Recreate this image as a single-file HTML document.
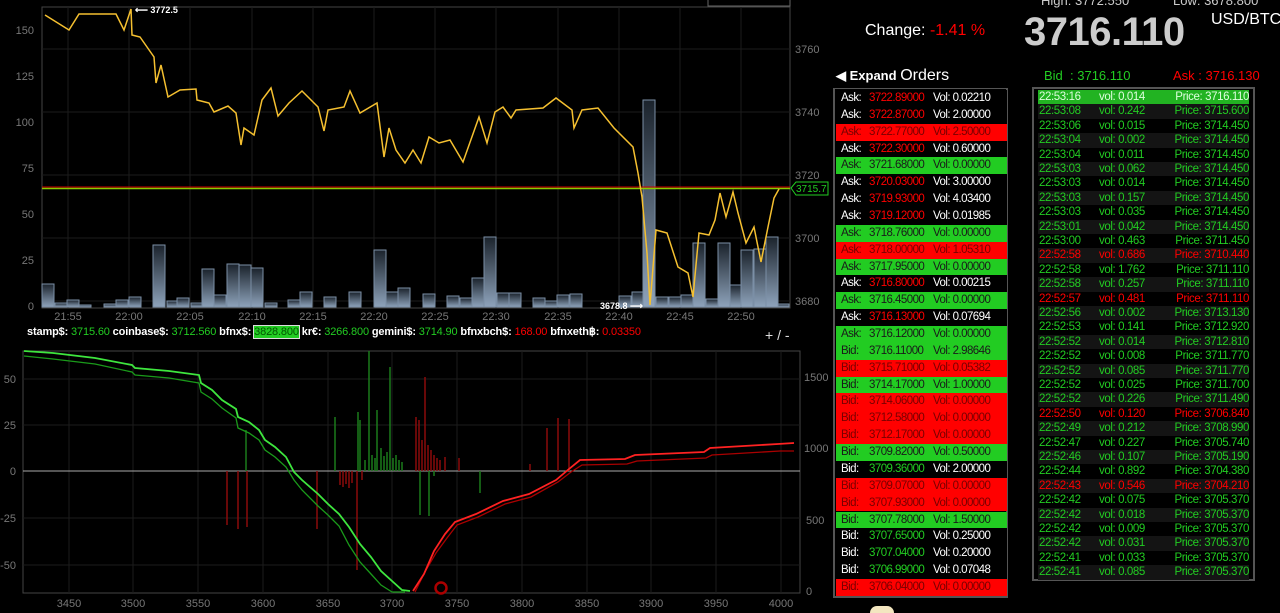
<!DOCTYPE html>
<html><head><meta charset="utf-8"><style>
*{margin:0;padding:0;box-sizing:border-box}
body{width:1280px;height:613px;background:#000;overflow:hidden;position:relative;font-family:"Liberation Sans",sans-serif;color:#fff}
.a{position:absolute;white-space:nowrap}
#ord{position:absolute;left:833px;top:88px;width:175px;height:510px;border:2px solid #555;border-top-width:1px}
.or{position:absolute;left:1px;width:171px;height:16.86px;font-size:11.5px;letter-spacing:-0.55px;line-height:17px}
.or span{position:absolute}
.k{left:5px}.p{left:33px}.v{left:97px}
.bk{background:#000;color:#fff}.bk .p{color:#f00}.bk.b .p{color:#2c2}
.gr{background:#2c2;color:#1a1a1a}.gr .p,.gr .v{color:#1a1a1a}
.rd{background:#f00;color:#700}
#trd{position:absolute;left:1032px;top:87px;width:223px;height:494px;border:2px solid #555}
.tr{position:absolute;left:4px;width:211px;height:14.4px;font-size:11.5px;letter-spacing:-0.4px;line-height:14.4px;color:#2c2}
.tr span{position:absolute}
.t1{left:1px}.t2{left:61px}.t3{right:0}
.g1{background:#141414}
.red{color:#f00}
#tick{position:absolute;left:27px;top:325px;font-size:11px;letter-spacing:-0.15px;white-space:nowrap;line-height:14px}
#tick b{color:#fff}
#tick .g{color:#2c2}#tick .r{color:#f00}
</style></head><body>

<svg class="a" style="left:0;top:0" width="830" height="613" font-family="Liberation Sans" font-size="11">
<rect x="42" y="7" width="748" height="301" fill="#000" stroke="#444"/>
<g stroke="#1c1c1c">
<line x1="42" y1="49" x2="790" y2="49"/><line x1="42" y1="112" x2="790" y2="112"/><line x1="42" y1="175" x2="790" y2="175"/><line x1="42" y1="238" x2="790" y2="238"/><line x1="42" y1="301" x2="790" y2="301"/>
<line x1="68" y1="7" x2="68" y2="308"/><line x1="129" y1="7" x2="129" y2="308"/><line x1="190" y1="7" x2="190" y2="308"/><line x1="252" y1="7" x2="252" y2="308"/><line x1="313" y1="7" x2="313" y2="308"/><line x1="374" y1="7" x2="374" y2="308"/><line x1="435" y1="7" x2="435" y2="308"/><line x1="496" y1="7" x2="496" y2="308"/><line x1="558" y1="7" x2="558" y2="308"/><line x1="619" y1="7" x2="619" y2="308"/><line x1="680" y1="7" x2="680" y2="308"/><line x1="741" y1="7" x2="741" y2="308"/>
</g>
<rect x="708" y="-2" width="82" height="8" fill="#000" stroke="#666"/>
<defs><linearGradient id="vg" x1="0" y1="0" x2="0" y2="1"><stop offset="0" stop-color="#1b232c"/><stop offset="1" stop-color="#8ea3bb"/></linearGradient></defs>
<g fill="url(#vg)" stroke="#7b8fa6" stroke-width="1">
<rect x="42" y="284" width="12" height="23"/><rect x="55" y="303" width="12" height="4"/><rect x="67" y="300" width="12" height="7"/><rect x="79" y="305" width="12" height="2"/><rect x="104" y="304" width="12" height="3"/><rect x="116" y="300" width="12" height="7"/><rect x="129" y="297" width="12" height="10"/><rect x="153" y="245" width="12" height="62"/><rect x="167" y="301" width="12" height="6"/><rect x="177" y="298" width="12" height="9"/><rect x="191" y="303" width="12" height="4"/><rect x="202" y="269" width="12" height="38"/><rect x="214" y="295" width="12" height="12"/><rect x="227" y="264" width="12" height="43"/><rect x="239" y="265" width="12" height="42"/><rect x="251" y="268" width="12" height="39"/><rect x="265" y="303" width="12" height="4"/><rect x="288" y="300" width="12" height="7"/><rect x="300" y="292" width="12" height="15"/><rect x="324" y="297" width="12" height="10"/><rect x="349" y="292" width="12" height="15"/><rect x="374" y="250" width="12" height="57"/><rect x="386" y="292" width="12" height="15"/><rect x="398" y="288" width="12" height="19"/><rect x="423" y="294" width="12" height="13"/><rect x="447" y="296" width="12" height="11"/><rect x="460" y="298" width="12" height="9"/><rect x="472" y="278" width="12" height="29"/><rect x="484" y="237" width="12" height="70"/><rect x="497" y="293" width="12" height="14"/><rect x="509" y="293" width="12" height="14"/><rect x="533" y="298" width="12" height="9"/><rect x="545" y="301" width="12" height="6"/><rect x="557" y="295" width="12" height="12"/><rect x="570" y="294" width="12" height="13"/><rect x="619" y="296" width="12" height="11"/><rect x="632" y="292" width="12" height="15"/><rect x="643" y="100" width="12" height="207"/><rect x="656" y="297" width="12" height="10"/><rect x="669" y="297" width="12" height="10"/><rect x="681" y="295" width="12" height="12"/><rect x="693" y="243" width="12" height="64"/><rect x="706" y="299" width="12" height="8"/><rect x="718" y="243" width="12" height="64"/><rect x="730" y="285" width="12" height="22"/><rect x="741" y="250" width="12" height="57"/><rect x="754" y="249" width="12" height="58"/><rect x="766" y="237" width="12" height="70"/><rect x="778" y="304" width="11" height="3"/>
</g>
<line x1="42" y1="187" x2="790" y2="187" stroke="#c00" stroke-width="1"/>
<line x1="42" y1="188.5" x2="790" y2="188.5" stroke="#8c0" stroke-width="1.5"/>
<polyline fill="none" stroke="#f5c030" stroke-width="1.5" points="45,15 53,20 69,30 79,14 116,14 124,30 131,9 132,35 140,37 154,57 156,83 161,65 168,97 180,90 196,89 197,100 209,103 214,112 228,106 236,113 241,145 244,128 254,135 262,100 271,88 278,116 289,103 302,91 318,107 324,131 328,110 344,107 350,91 360,113 377,103 384,157 389,128 396,150 405,163 413,150 421,163 429,137 439,143 450,140 463,162 479,117 487,143 495,112 503,107 511,118 516,110 543,108 556,98 572,110 574,128 582,110 598,108 614,128 633,147 638,173 642,197 647,253 650,305 656,230 667,233 678,267 688,273 693,297 699,233 709,235 715,220 720,193 726,217 733,192 738,213 746,243 754,227 761,262 768,227 774,198 779,189"/>
<g fill="#777" text-anchor="end"><text x="34" y="34">150</text><text x="34" y="80">125</text><text x="34" y="126">100</text><text x="34" y="172">75</text><text x="34" y="218">50</text><text x="34" y="264">25</text><text x="34" y="310">0</text></g>
<g fill="#777"><text x="795" y="53">3760</text><text x="795" y="116">3740</text><text x="795" y="179">3720</text><text x="795" y="242">3700</text><text x="795" y="305">3680</text></g>
<g fill="#777" text-anchor="middle"><text x="68" y="320">21:55</text><text x="129" y="320">22:00</text><text x="190" y="320">22:05</text><text x="252" y="320">22:10</text><text x="313" y="320">22:15</text><text x="374" y="320">22:20</text><text x="435" y="320">22:25</text><text x="496" y="320">22:30</text><text x="558" y="320">22:35</text><text x="619" y="320">22:40</text><text x="680" y="320">22:45</text><text x="741" y="320">22:50</text></g>
<text x="135" y="13" fill="#fff" font-size="9" font-weight="bold">⟵ 3772.5</text>
<text x="600" y="309" fill="#fff" font-size="9" font-weight="bold">3678.8 ⟶</text>
<polygon points="791,188 796,182 828,182 828,195 796,195" fill="#000" stroke="#2c2"/>
<text x="796" y="192" fill="#2c2" font-size="10">3715.7</text>
<text x="765" y="340" fill="#ddd" font-size="14">+ / -</text>
<rect x="23" y="351" width="777" height="242" fill="#000" stroke="#444"/>
<g stroke="#1c1c1c">
<line x1="23" y1="379" x2="800" y2="379"/><line x1="23" y1="425" x2="800" y2="425"/><line x1="23" y1="518" x2="800" y2="518"/><line x1="23" y1="565" x2="800" y2="565"/>
<line x1="69" y1="351" x2="69" y2="593"/><line x1="133" y1="351" x2="133" y2="593"/><line x1="198" y1="351" x2="198" y2="593"/><line x1="263" y1="351" x2="263" y2="593"/><line x1="328" y1="351" x2="328" y2="593"/><line x1="392" y1="351" x2="392" y2="593"/><line x1="457" y1="351" x2="457" y2="593"/><line x1="522" y1="351" x2="522" y2="593"/><line x1="587" y1="351" x2="587" y2="593"/><line x1="651" y1="351" x2="651" y2="593"/><line x1="716" y1="351" x2="716" y2="593"/><line x1="781" y1="351" x2="781" y2="593"/>
</g>
<line x1="23" y1="471" x2="800" y2="471" stroke="#aaa"/>
<g stroke="#1a7a1a" stroke-width="1.5">
<line x1="246" y1="471" x2="246" y2="430"/><line x1="335" y1="471" x2="335" y2="417"/><line x1="358" y1="471" x2="358" y2="412"/><line x1="360" y1="471" x2="360" y2="420"/><line x1="369" y1="471" x2="369" y2="351"/><line x1="377" y1="471" x2="377" y2="410"/><line x1="390" y1="471" x2="390" y2="367"/>
<line x1="372" y1="471" x2="372" y2="455"/><line x1="375" y1="471" x2="375" y2="458"/><line x1="381" y1="471" x2="381" y2="448"/><line x1="384" y1="471" x2="384" y2="456"/><line x1="387" y1="471" x2="387" y2="452"/><line x1="393" y1="471" x2="393" y2="458"/><line x1="396" y1="471" x2="396" y2="455"/><line x1="399" y1="471" x2="399" y2="460"/><line x1="402" y1="471" x2="402" y2="462"/><line x1="365" y1="471" x2="365" y2="460"/>
<line x1="420" y1="471" x2="420" y2="515"/><line x1="429" y1="471" x2="429" y2="516"/><line x1="480" y1="471" x2="480" y2="493"/><line x1="434" y1="471" x2="434" y2="476"/>
</g>
<g stroke="#8a0a0a" stroke-width="1.5">
<line x1="416" y1="471" x2="416" y2="417"/><line x1="425" y1="471" x2="425" y2="377"/><line x1="419" y1="471" x2="419" y2="420"/><line x1="422" y1="471" x2="422" y2="440"/><line x1="428" y1="471" x2="428" y2="445"/><line x1="431" y1="471" x2="431" y2="450"/><line x1="434" y1="471" x2="434" y2="455"/><line x1="437" y1="471" x2="437" y2="458"/><line x1="440" y1="471" x2="440" y2="460"/><line x1="445" y1="471" x2="445" y2="457"/><line x1="459" y1="471" x2="459" y2="458"/>
<line x1="227" y1="471" x2="227" y2="525"/><line x1="238" y1="471" x2="238" y2="529"/><line x1="247" y1="471" x2="247" y2="527"/><line x1="317" y1="471" x2="317" y2="529"/><line x1="357" y1="471" x2="357" y2="570"/>
<line x1="340" y1="471" x2="340" y2="485"/><line x1="343" y1="471" x2="343" y2="487"/><line x1="346" y1="471" x2="346" y2="484"/><line x1="349" y1="471" x2="349" y2="488"/><line x1="352" y1="471" x2="352" y2="483"/><line x1="362" y1="471" x2="362" y2="480"/>
<line x1="547" y1="471" x2="547" y2="428"/><line x1="558" y1="471" x2="558" y2="418"/><line x1="569" y1="471" x2="569" y2="419"/><line x1="530" y1="471" x2="530" y2="464"/>
</g>
<polyline fill="none" stroke="#1a9a1a" stroke-width="1.3" points="24,356 53,359 95,364 132,372 135,375 169,378 199,383 201,392 212,399 222,408 236,418 238,428 249,433 259,440 265,450 275,457 286,467 294,480 302,490 318,506 328,515 339,526 349,545 360,562 371,574 381,585 392,592 405,592"/>
<polyline fill="none" stroke="#3ee63e" stroke-width="1.8" points="24,351 53,353 95,358 132,365 135,368 169,371 199,375 201,383 212,390 222,400 236,409 238,417 249,422 259,430 265,440 275,447 286,457 294,472 302,480 318,494 328,504 339,514 349,527 360,544 371,557 381,571 392,581 402,590 410,591"/>
<polyline fill="none" stroke="#a00" stroke-width="1.3" points="415,592 426,570 436,553 447,538 457,525 478,517 505,504 531,497 558,482 571,472 582,465 627,464 637,461 706,458 712,455 780,451 794,451"/>
<polyline fill="none" stroke="#f22" stroke-width="1.8" points="413,591 424,574 434,551 445,534 455,522 476,514 503,501 529,494 556,480 569,469 580,460 625,459 635,455 704,452 710,448 778,444 794,443"/>
<circle cx="441" cy="588" r="5.5" fill="none" stroke="#a00" stroke-width="2.5"/>
<g fill="#777" text-anchor="end"><text x="16" y="383">50</text><text x="16" y="429">25</text><text x="16" y="475">0</text><text x="16" y="522">-25</text><text x="16" y="569">-50</text></g>
<g fill="#777"><text x="804" y="381">1500</text><text x="804" y="452">1000</text><text x="806" y="524">500</text><text x="806" y="595">0</text></g>
<g fill="#777" text-anchor="middle"><text x="69" y="607">3450</text><text x="133" y="607">3500</text><text x="198" y="607">3550</text><text x="263" y="607">3600</text><text x="328" y="607">3650</text><text x="392" y="607">3700</text><text x="457" y="607">3750</text><text x="522" y="607">3800</text><text x="587" y="607">3850</text><text x="651" y="607">3900</text><text x="716" y="607">3950</text><text x="781" y="607">4000</text></g>
</svg>

<div id="tick"><b>stamp$:</b> <span class="g">3715.60</span> <b>coinbase$:</b> <span class="g">3712.560</span> <b>bfnx$:</b> <span style="background:#2c2;color:#050;outline:1px solid #ddd">3828.800</span> <b>kr€:</b> <span class="g">3266.800</span> <b>gemini$:</b> <span class="g">3714.90</span> <b>bfnxbch$:</b> <span class="r">168.00</span> <b>bfnxeth฿:</b> <span class="r">0.03350</span></div>

<div class="a" style="left:1041px;top:-7px;font-size:13px;color:#ccc">High: 3772.550</div>
<div class="a" style="left:1173px;top:-7px;font-size:13px;color:#ccc">Low: 3678.800</div>
<div class="a" style="left:865px;top:22px;font-size:16px;color:#fff">Change: <span style="color:#f00">-1.41 %</span></div>
<div class="a" style="left:1024px;top:10px;font-size:40px;font-weight:bold;color:#ccc;letter-spacing:-0.5px">3716.110</div>
<div class="a" style="left:1211px;top:11px;font-size:16px;color:#fff">USD/BTC</div>
<div class="a" style="left:836px;top:67px;font-size:13px;font-weight:bold;color:#fff">◀ Expand <span style="font-weight:normal;font-size:16px">Orders</span></div>
<div class="a" style="left:1044px;top:68px;font-size:13px;color:#2c2">Bid &nbsp;: 3716.110</div>
<div class="a" style="left:1173px;top:68px;font-size:13px;color:#f00">Ask : 3716.130</div>

<div id="ord">
<div class="or bk" style="top:1px"><span class="k">Ask:</span><span class="p">3722.89000</span><span class="v">Vol: 0.02210</span></div>
<div class="or bk" style="top:17.86px"><span class="k">Ask:</span><span class="p">3722.87000</span><span class="v">Vol: 2.00000</span></div>
<div class="or rd" style="top:34.72px"><span class="k">Ask:</span><span class="p">3722.77000</span><span class="v">Vol: 2.50000</span></div>
<div class="or bk" style="top:51.58px"><span class="k">Ask:</span><span class="p">3722.30000</span><span class="v">Vol: 0.60000</span></div>
<div class="or gr" style="top:68.44px"><span class="k">Ask:</span><span class="p">3721.68000</span><span class="v">Vol: 0.00000</span></div>
<div class="or bk" style="top:85.3px"><span class="k">Ask:</span><span class="p">3720.03000</span><span class="v">Vol: 3.00000</span></div>
<div class="or bk" style="top:102.16px"><span class="k">Ask:</span><span class="p">3719.93000</span><span class="v">Vol: 4.03400</span></div>
<div class="or bk" style="top:119.02px"><span class="k">Ask:</span><span class="p">3719.12000</span><span class="v">Vol: 0.01985</span></div>
<div class="or gr" style="top:135.88px"><span class="k">Ask:</span><span class="p">3718.76000</span><span class="v">Vol: 0.00000</span></div>
<div class="or rd" style="top:152.74px"><span class="k">Ask:</span><span class="p">3718.00000</span><span class="v">Vol: 1.05310</span></div>
<div class="or gr" style="top:169.6px"><span class="k">Ask:</span><span class="p">3717.95000</span><span class="v">Vol: 0.00000</span></div>
<div class="or bk" style="top:186.46px"><span class="k">Ask:</span><span class="p">3716.80000</span><span class="v">Vol: 0.00215</span></div>
<div class="or gr" style="top:203.32px"><span class="k">Ask:</span><span class="p">3716.45000</span><span class="v">Vol: 0.00000</span></div>
<div class="or bk" style="top:220.18px"><span class="k">Ask:</span><span class="p">3716.13000</span><span class="v">Vol: 0.07694</span></div>
<div class="or gr" style="top:237.04px"><span class="k">Ask:</span><span class="p">3716.12000</span><span class="v">Vol: 0.00000</span></div>
<div class="or gr" style="top:253.9px"><span class="k">Bid:</span><span class="p">3716.11000</span><span class="v">Vol: 2.98646</span></div>
<div class="or rd" style="top:270.76px"><span class="k">Bid:</span><span class="p">3715.71000</span><span class="v">Vol: 0.05382</span></div>
<div class="or gr" style="top:287.62px"><span class="k">Bid:</span><span class="p">3714.17000</span><span class="v">Vol: 1.00000</span></div>
<div class="or rd" style="top:304.48px"><span class="k">Bid:</span><span class="p">3714.06000</span><span class="v">Vol: 0.00000</span></div>
<div class="or rd" style="top:321.34px"><span class="k">Bid:</span><span class="p">3712.58000</span><span class="v">Vol: 0.00000</span></div>
<div class="or rd" style="top:338.2px"><span class="k">Bid:</span><span class="p">3712.17000</span><span class="v">Vol: 0.00000</span></div>
<div class="or gr" style="top:355.06px"><span class="k">Bid:</span><span class="p">3709.82000</span><span class="v">Vol: 0.50000</span></div>
<div class="or bk b" style="top:371.92px"><span class="k">Bid:</span><span class="p">3709.36000</span><span class="v">Vol: 2.00000</span></div>
<div class="or rd" style="top:388.78px"><span class="k">Bid:</span><span class="p">3709.07000</span><span class="v">Vol: 0.00000</span></div>
<div class="or rd" style="top:405.64px"><span class="k">Bid:</span><span class="p">3707.93000</span><span class="v">Vol: 0.00000</span></div>
<div class="or gr" style="top:422.5px"><span class="k">Bid:</span><span class="p">3707.78000</span><span class="v">Vol: 1.50000</span></div>
<div class="or bk b" style="top:439.36px"><span class="k">Bid:</span><span class="p">3707.65000</span><span class="v">Vol: 0.25000</span></div>
<div class="or bk b" style="top:456.22px"><span class="k">Bid:</span><span class="p">3707.04000</span><span class="v">Vol: 0.20000</span></div>
<div class="or bk b" style="top:473.08px"><span class="k">Bid:</span><span class="p">3706.99000</span><span class="v">Vol: 0.07048</span></div>
<div class="or rd" style="top:489.94px"><span class="k">Bid:</span><span class="p">3706.04000</span><span class="v">Vol: 0.00000</span></div>
</div>

<div id="trd">
<div class="tr" style="top:1px;background:#22b322;color:#dfd"><span class="t1">22:53:16</span><span class="t2">vol: 0.014</span><span class="t3">Price: 3716.110</span></div>
<div class="tr g1" style="top:15.4px"><span class="t1">22:53:08</span><span class="t2">vol: 0.242</span><span class="t3">Price: 3715.600</span></div>
<div class="tr" style="top:29.8px"><span class="t1">22:53:06</span><span class="t2">vol: 0.015</span><span class="t3">Price: 3714.450</span></div>
<div class="tr g1" style="top:44.2px"><span class="t1">22:53:04</span><span class="t2">vol: 0.002</span><span class="t3">Price: 3714.450</span></div>
<div class="tr" style="top:58.6px"><span class="t1">22:53:04</span><span class="t2">vol: 0.011</span><span class="t3">Price: 3714.450</span></div>
<div class="tr g1" style="top:73px"><span class="t1">22:53:03</span><span class="t2">vol: 0.062</span><span class="t3">Price: 3714.450</span></div>
<div class="tr" style="top:87.4px"><span class="t1">22:53:03</span><span class="t2">vol: 0.014</span><span class="t3">Price: 3714.450</span></div>
<div class="tr g1" style="top:101.8px"><span class="t1">22:53:03</span><span class="t2">vol: 0.157</span><span class="t3">Price: 3714.450</span></div>
<div class="tr" style="top:116.2px"><span class="t1">22:53:03</span><span class="t2">vol: 0.035</span><span class="t3">Price: 3714.450</span></div>
<div class="tr g1" style="top:130.6px"><span class="t1">22:53:01</span><span class="t2">vol: 0.042</span><span class="t3">Price: 3714.450</span></div>
<div class="tr" style="top:145px"><span class="t1">22:53:00</span><span class="t2">vol: 0.463</span><span class="t3">Price: 3711.450</span></div>
<div class="tr g1 red" style="top:159.4px"><span class="t1">22:52:58</span><span class="t2">vol: 0.686</span><span class="t3">Price: 3710.440</span></div>
<div class="tr" style="top:173.8px"><span class="t1">22:52:58</span><span class="t2">vol: 1.762</span><span class="t3">Price: 3711.110</span></div>
<div class="tr g1" style="top:188.2px"><span class="t1">22:52:58</span><span class="t2">vol: 0.257</span><span class="t3">Price: 3711.110</span></div>
<div class="tr red" style="top:202.6px"><span class="t1">22:52:57</span><span class="t2">vol: 0.481</span><span class="t3">Price: 3711.110</span></div>
<div class="tr g1" style="top:217px"><span class="t1">22:52:56</span><span class="t2">vol: 0.002</span><span class="t3">Price: 3713.130</span></div>
<div class="tr" style="top:231.4px"><span class="t1">22:52:53</span><span class="t2">vol: 0.141</span><span class="t3">Price: 3712.920</span></div>
<div class="tr g1" style="top:245.8px"><span class="t1">22:52:52</span><span class="t2">vol: 0.014</span><span class="t3">Price: 3712.810</span></div>
<div class="tr" style="top:260.2px"><span class="t1">22:52:52</span><span class="t2">vol: 0.008</span><span class="t3">Price: 3711.770</span></div>
<div class="tr g1" style="top:274.6px"><span class="t1">22:52:52</span><span class="t2">vol: 0.085</span><span class="t3">Price: 3711.770</span></div>
<div class="tr" style="top:289px"><span class="t1">22:52:52</span><span class="t2">vol: 0.025</span><span class="t3">Price: 3711.700</span></div>
<div class="tr g1" style="top:303.4px"><span class="t1">22:52:52</span><span class="t2">vol: 0.226</span><span class="t3">Price: 3711.490</span></div>
<div class="tr red" style="top:317.8px"><span class="t1">22:52:50</span><span class="t2">vol: 0.120</span><span class="t3">Price: 3706.840</span></div>
<div class="tr g1" style="top:332.2px"><span class="t1">22:52:49</span><span class="t2">vol: 0.212</span><span class="t3">Price: 3708.990</span></div>
<div class="tr" style="top:346.6px"><span class="t1">22:52:47</span><span class="t2">vol: 0.227</span><span class="t3">Price: 3705.740</span></div>
<div class="tr g1" style="top:361px"><span class="t1">22:52:46</span><span class="t2">vol: 0.107</span><span class="t3">Price: 3705.190</span></div>
<div class="tr" style="top:375.4px"><span class="t1">22:52:44</span><span class="t2">vol: 0.892</span><span class="t3">Price: 3704.380</span></div>
<div class="tr g1 red" style="top:389.8px"><span class="t1">22:52:43</span><span class="t2">vol: 0.546</span><span class="t3">Price: 3704.210</span></div>
<div class="tr" style="top:404.2px"><span class="t1">22:52:42</span><span class="t2">vol: 0.075</span><span class="t3">Price: 3705.370</span></div>
<div class="tr g1" style="top:418.6px"><span class="t1">22:52:42</span><span class="t2">vol: 0.018</span><span class="t3">Price: 3705.370</span></div>
<div class="tr" style="top:433px"><span class="t1">22:52:42</span><span class="t2">vol: 0.009</span><span class="t3">Price: 3705.370</span></div>
<div class="tr g1" style="top:447.4px"><span class="t1">22:52:42</span><span class="t2">vol: 0.031</span><span class="t3">Price: 3705.370</span></div>
<div class="tr" style="top:461.8px"><span class="t1">22:52:41</span><span class="t2">vol: 0.033</span><span class="t3">Price: 3705.370</span></div>
<div class="tr g1" style="top:476.2px"><span class="t1">22:52:41</span><span class="t2">vol: 0.085</span><span class="t3">Price: 3705.370</span></div>
</div>
<div class="a" style="left:870px;top:606px;width:24px;height:7px;border-radius:12px 12px 0 0;background:#f3e6c0"></div>
</body></html>
